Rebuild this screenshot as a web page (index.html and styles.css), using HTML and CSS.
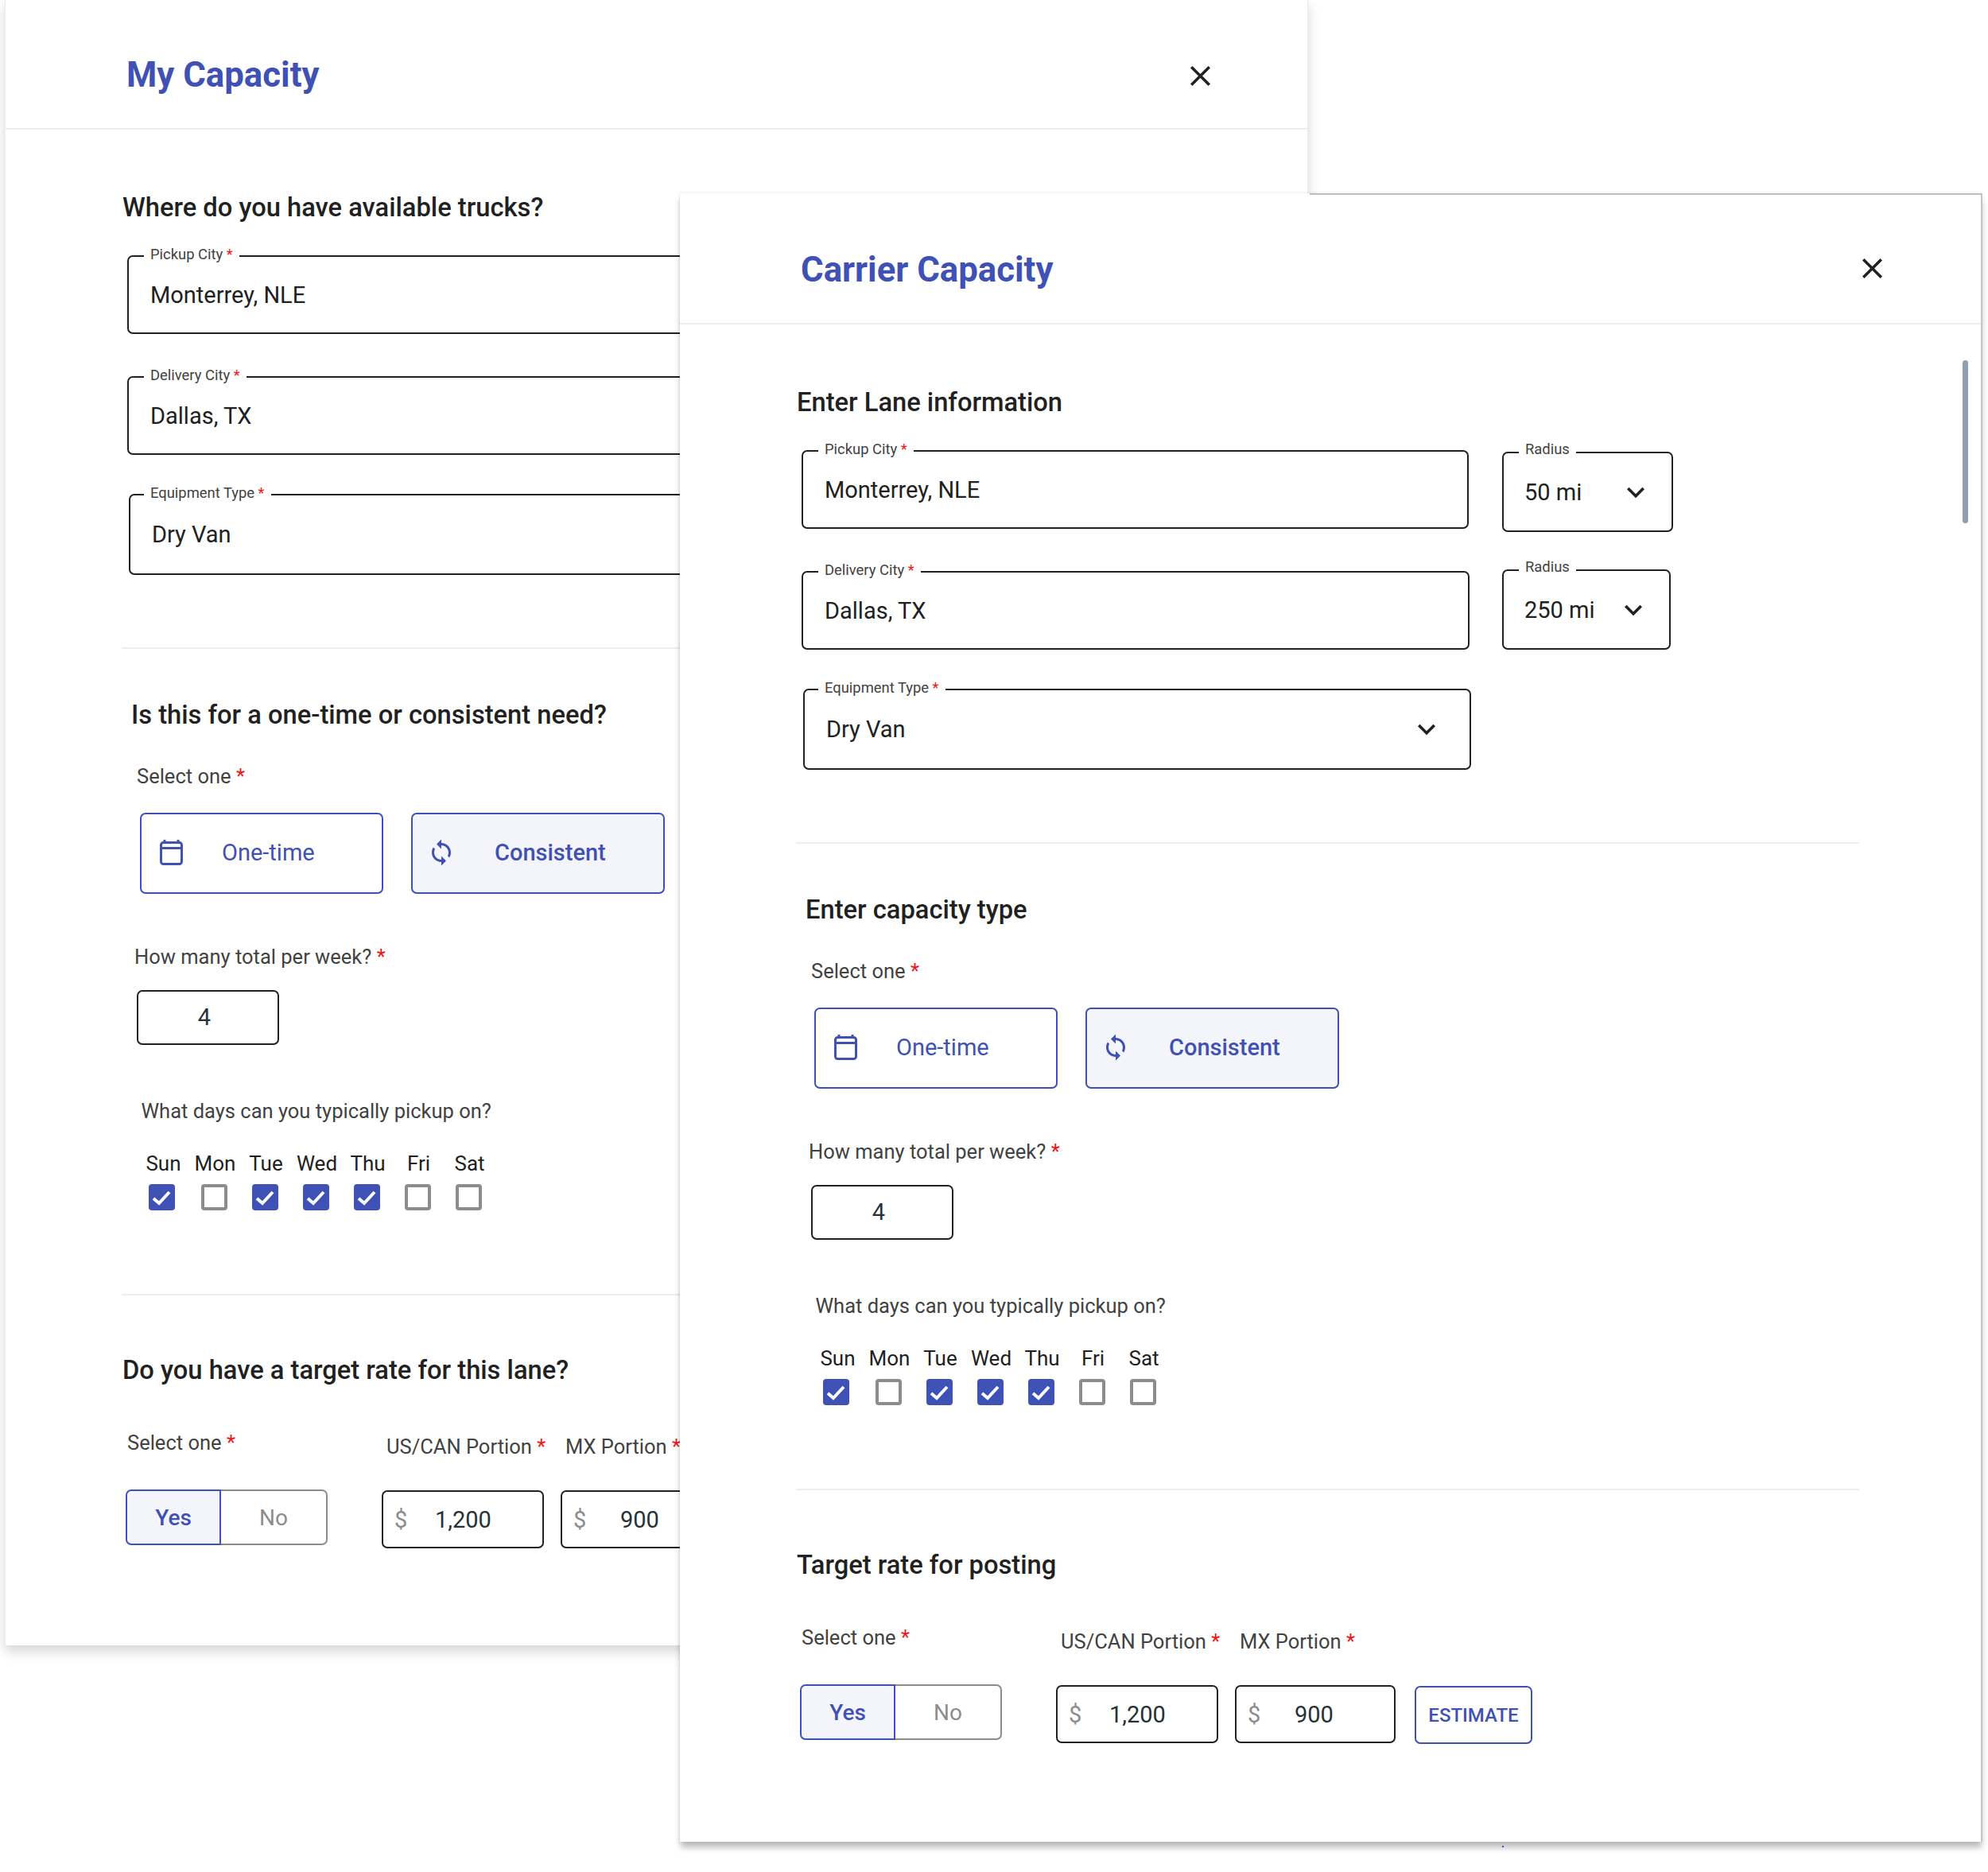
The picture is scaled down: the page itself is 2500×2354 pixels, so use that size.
FILE: index.html
```html
<!DOCTYPE html>
<html lang="en">
<head>
<meta charset="utf-8">
<title>Capacity</title>
<link rel="stylesheet" href="styles.css">
</head>
<body>
<main class="stage">

<article class="panel panel-back">
  <header class="panel-head">
    <h1 class="title">My Capacity</h1>
    <svg class="close" viewBox="0 0 24 24"><path d="M19 6.41 17.59 5 12 10.59 6.41 5 5 6.41 10.59 12 5 17.59 6.41 19 12 13.41 17.59 19 19 17.59 13.41 12z"/></svg>
  </header>
  <section class="sec-lane">
    <h2 class="heading">Where do you have available trucks?</h2>
    <div class="lane-row lane-row-1">
      <div class="field field-city"><span class="legend">Pickup City <em>*</em></span><span class="value">Monterrey, NLE</span></div>
    </div>
    <div class="lane-row lane-row-2">
      <div class="field field-city field-delivery"><span class="legend">Delivery City <em>*</em></span><span class="value">Dallas, TX</span></div>
    </div>
    <div class="lane-row lane-row-3">
      <div class="field field-equip"><span class="legend">Equipment Type <em>*</em></span><span class="value">Dry Van</span></div>
    </div>
  </section>
  <hr class="rule rule-1">
  <section class="sec-type">
    <h2 class="heading heading-type">Is this for a one-time or consistent need?</h2>
    <p class="text text-select">Select one <em>*</em></p>
    <div class="options">
      <div class="option option-one">
        <svg class="cal-icon" viewBox="0 0 29 32"><path d="M6 4V0M23 4V0M1.500 10.500H27.500"/><rect x="1.500" y="3.500" width="26" height="27" rx="3"/></svg>
        <span>One-time</span>
      </div>
      <div class="option option-two">
        <svg class="sync-icon" viewBox="0 0 24 24"><path d="M12 4V1L8 5l4 4V6c3.31 0 6 2.69 6 6 0 1.01-.25 1.97-.7 2.8l1.46 1.46C19.54 15.03 20 13.57 20 12c0-4.42-3.58-8-8-8zm0 14c-3.31 0-6-2.69-6-6 0-1.01.25-1.97.7-2.8L5.24 7.74C4.46 8.97 4 10.43 4 12c0 4.42 3.58 8 8 8v3l4-4-4-4v3z"/></svg>
        <span>Consistent</span>
      </div>
    </div>
    <p class="text text-many">How many total per week? <em>*</em></p>
    <div class="count">4</div>
    <p class="text text-days">What days can you typically pickup on?</p>
    <div class="days">
      <div class="day day-sun">Sun<span class="check on"><svg viewBox="0 0 33 33"><path d="M6 18l7 6 13-14"/></svg></span></div>
      <div class="day">Mon<span class="check"></span></div>
      <div class="day">Tue<span class="check on"><svg viewBox="0 0 33 33"><path d="M6 18l7 6 13-14"/></svg></span></div>
      <div class="day">Wed<span class="check on"><svg viewBox="0 0 33 33"><path d="M6 18l7 6 13-14"/></svg></span></div>
      <div class="day">Thu<span class="check on"><svg viewBox="0 0 33 33"><path d="M6 18l7 6 13-14"/></svg></span></div>
      <div class="day">Fri<span class="check"></span></div>
      <div class="day">Sat<span class="check"></span></div>
    </div>
  </section>
  <hr class="rule rule-2">
  <section class="sec-rate">
    <h2 class="heading heading-rate">Do you have a target rate for this lane?</h2>
    <div class="rates">
      <div class="col-choice">
        <p class="text text-choice">Select one <em>*</em></p>
        <div class="toggle"><span class="yes">Yes</span><span class="no">No</span></div>
      </div>
      <div class="col-us">
        <p class="text text-portion">US/CAN Portion <em>*</em></p>
        <div class="money"><span class="dollar">$</span><span class="amount">1,200</span></div>
      </div>
      <div class="col-mx">
        <p class="text text-portion">MX Portion <em>*</em></p>
        <div class="money money-mx"><span class="dollar">$</span><span class="amount">900</span></div>
      </div>
    </div>
  </section>
</article>

<article class="panel panel-front">
  <header class="panel-head">
    <h1 class="title">Carrier Capacity</h1>
    <svg class="close" viewBox="0 0 24 24"><path d="M19 6.41 17.59 5 12 10.59 6.41 5 5 6.41 10.59 12 5 17.59 6.41 19 12 13.41 17.59 19 19 17.59 13.41 12z"/></svg>
  </header>
  <div class="scroll-thumb"></div>
  <section class="sec-lane">
    <h2 class="heading">Enter Lane information</h2>
    <div class="lane-row lane-row-1">
      <div class="field field-city"><span class="legend">Pickup City <em>*</em></span><span class="value">Monterrey, NLE</span></div>
      <div class="field field-radius field-radius-1"><span class="legend">Radius</span><span class="value">50 mi</span><svg class="chev" viewBox="0 0 24 24"><path d="M16.59 8.59 12 13.17 7.41 8.59 6 10l6 6 6-6z"/></svg></div>
    </div>
    <div class="lane-row lane-row-2">
      <div class="field field-city field-delivery"><span class="legend">Delivery City <em>*</em></span><span class="value">Dallas, TX</span></div>
      <div class="field field-radius field-radius-2"><span class="legend">Radius</span><span class="value">250 mi</span><svg class="chev" viewBox="0 0 24 24"><path d="M16.59 8.59 12 13.17 7.41 8.59 6 10l6 6 6-6z"/></svg></div>
    </div>
    <div class="lane-row lane-row-3">
      <div class="field field-equip"><span class="legend">Equipment Type <em>*</em></span><span class="value">Dry Van</span><svg class="chev" viewBox="0 0 24 24"><path d="M16.59 8.59 12 13.17 7.41 8.59 6 10l6 6 6-6z"/></svg></div>
    </div>
  </section>
  <hr class="rule rule-1">
  <section class="sec-type">
    <h2 class="heading heading-type">Enter capacity type</h2>
    <p class="text text-select">Select one <em>*</em></p>
    <div class="options">
      <div class="option option-one">
        <svg class="cal-icon" viewBox="0 0 29 32"><path d="M6 4V0M23 4V0M1.500 10.500H27.500"/><rect x="1.500" y="3.500" width="26" height="27" rx="3"/></svg>
        <span>One-time</span>
      </div>
      <div class="option option-two">
        <svg class="sync-icon" viewBox="0 0 24 24"><path d="M12 4V1L8 5l4 4V6c3.31 0 6 2.69 6 6 0 1.01-.25 1.97-.7 2.8l1.46 1.46C19.54 15.03 20 13.57 20 12c0-4.42-3.58-8-8-8zm0 14c-3.31 0-6-2.69-6-6 0-1.01.25-1.97.7-2.8L5.24 7.74C4.46 8.97 4 10.43 4 12c0 4.42 3.58 8 8 8v3l4-4-4-4v3z"/></svg>
        <span>Consistent</span>
      </div>
    </div>
    <p class="text text-many">How many total per week? <em>*</em></p>
    <div class="count">4</div>
    <p class="text text-days">What days can you typically pickup on?</p>
    <div class="days">
      <div class="day day-sun">Sun<span class="check on"><svg viewBox="0 0 33 33"><path d="M6 18l7 6 13-14"/></svg></span></div>
      <div class="day">Mon<span class="check"></span></div>
      <div class="day">Tue<span class="check on"><svg viewBox="0 0 33 33"><path d="M6 18l7 6 13-14"/></svg></span></div>
      <div class="day">Wed<span class="check on"><svg viewBox="0 0 33 33"><path d="M6 18l7 6 13-14"/></svg></span></div>
      <div class="day">Thu<span class="check on"><svg viewBox="0 0 33 33"><path d="M6 18l7 6 13-14"/></svg></span></div>
      <div class="day">Fri<span class="check"></span></div>
      <div class="day">Sat<span class="check"></span></div>
    </div>
  </section>
  <hr class="rule rule-2">
  <section class="sec-rate">
    <h2 class="heading heading-rate">Target rate for posting</h2>
    <div class="rates">
      <div class="col-choice">
        <p class="text text-choice">Select one <em>*</em></p>
        <div class="toggle"><span class="yes">Yes</span><span class="no">No</span></div>
      </div>
      <div class="col-us">
        <p class="text text-portion">US/CAN Portion <em>*</em></p>
        <div class="money"><span class="dollar">$</span><span class="amount">1,200</span></div>
      </div>
      <div class="col-mx">
        <p class="text text-portion">MX Portion <em>*</em></p>
        <div class="money money-mx"><span class="dollar">$</span><span class="amount">900</span></div>
      </div>
      <div class="estimate">ESTIMATE</div>
    </div>
  </section>
</article>

<span class="stray-dot"></span>
</main>
</body>
</html>
```

FILE: styles.css
```css
* { box-sizing: border-box; }
html, body { margin: 0; padding: 0; background: #fff; }
body { font-family: Roboto, "Liberation Sans", sans-serif; color: #212121; }
.stage { position: relative; width: 2500px; height: 2354px; overflow: hidden; }

/* Two overlapping windows on a free canvas */
.panel { position: absolute; background: #fff; overflow: hidden; }
.panel-back { left: 6px; top: -2px; width: 1639px; height: 2071px; border-left: 1px solid #ececec; border-right: 1px solid #ececec; box-shadow: 0 8px 14px rgba(0,0,0,.16); }
.panel-front { left: 855px; top: 243px; width: 1638px; height: 2073px; border-right: 2px solid #c4c4c4; box-shadow: 0 8px 8px -1px rgba(0,0,0,.28), -1px 0 2px rgba(0,0,0,.06), 0 -2px 2px rgba(0,0,0,.03); }
.panel-front::before { content: ""; position: absolute; top: 0; left: 792px; right: 0; height: 2px; background: #bdbdbd; }

.panel-head { display: flex; align-items: flex-start; height: 165px; padding: 71px 115px 0 152px; border-bottom: 2px solid #eeeeee; }
.panel-back .panel-head { padding-right: 113px; }
.title { margin: 0; font-size: 43.75px; line-height: 50px; font-weight: 700; color: #3f51b5; }
.close { width: 43px; height: 43px; margin: 1.5px 0 0 auto; fill: #212121; }
.panel-back .close { margin-top: 5px; }

.scroll-thumb { position: absolute; right: 16px; top: 210px; width: 7px; height: 205px; border-radius: 4px; background: #8f9fae; }
.stray-dot { position: absolute; left: 1889px; top: 2321px; width: 2px; height: 2px; background: #3f51b5; }

.heading { margin: 78px 0 0 147px; font-size: 32.7px; line-height: 40px; font-weight: 500; color: #212121; }
em { font-style: normal; color: #f01414; }

.lane-row { display: flex; align-items: flex-start; margin-left: 153px; }
.lane-row-1 { margin-top: 40px; min-height: 103px; }
.lane-row-2 { margin-top: 47px; min-height: 101px; }
.lane-row-3 { margin-top: 49px; margin-left: 155px; }

.field { position: relative; flex: none; display: flex; align-items: center; justify-content: space-between; border: 2px solid #212121; border-radius: 7px; padding: 0 27px; }
.field-city { width: 839px; height: 99px; }
.field-delivery { margin-top: 2px; width: 840px; }
.field-equip { width: 840px; height: 102px; }
.field-radius { padding: 0 26px 0 26px; }
.field-radius-1 { width: 215px; height: 101px; margin: 2px 0 0 42px; }
.field-radius-2 { width: 212px; height: 101px; margin-left: 41px; }
.legend { position: absolute; top: -15px; left: 19px; padding: 0 8px; background: #fff; font-size: 18.4px; line-height: 24px; color: #424242; white-space: nowrap; }
.field-radius .legend { top: -17px; }
.field-equip .legend { left: 17px; }
.value { font-size: 29px; line-height: 40px; color: #212121; }
.chev { flex: none; width: 44px; height: 44px; margin-right: -3px; fill: #212121; }
.field-equip .chev { margin-right: 5px; }

.rule { height: 2px; margin: 0 0 0 146px; width: 1337px; border: 0; background: #eeeeee; }
.rule-1 { margin-top: 91px; }
.rule-2 { margin-top: 105px; }

.heading-type { margin: 63px 0 0 158px; }
.heading-rate { margin-top: 74px; }
.text { margin: 0; font-size: 25.5px; line-height: 32px; color: #424242; }
.text-select { margin: 41px 0 0 165px; }
.options { display: flex; gap: 35px; margin: 30px 0 0 169px; }
.option { display: flex; align-items: center; height: 102px; padding-bottom: 2px; border: 2px solid #3f51b5; border-radius: 7px; color: #3f51b5; font-size: 29px; }
.option-one { width: 306px; }
.option-two { width: 319px; background: #f4f5fb; font-weight: 500; }
.cal-icon { flex: none; width: 29px; height: 32px; margin: 0 49px 0 23px; fill: none; stroke: #3f51b5; stroke-width: 3; }
.sync-icon { flex: none; width: 36px; height: 36px; margin: 0 49px 0 18px; fill: #3f51b5; }
.text-many { margin: 63px 0 0 162px; }
.count { width: 179px; height: 69px; margin: 26px 0 0 165px; padding: 0 9px 2px 0; border: 2px solid #212121; border-radius: 7px; display: flex; align-items: center; justify-content: center; font-size: 29px; color: #263238; }
.text-days { margin: 67px 0 0 170.5px; }
.days { display: flex; margin: 34px 0 0 167.5px; }
.day { width: 64px; font-size: 26px; line-height: 32px; text-align: center; color: #212121; }
.day-sun { margin-right: 2px; width: 62px; }
.check { display: block; width: 33px; height: 33px; margin: 10px 0 0 14.500px; border: 4px solid #8c8c8c; border-radius: 4px; background: #fff; }
.day-sun .check { margin-left: 12.500px; }
.check.on { border: 0; background: #3f51b5; }
.check svg { display: block; width: 33px; height: 33px; fill: none; stroke: #fff; stroke-width: 4; }

.rates { display: flex; align-items: flex-start; margin: 55px 0 0 151px; }
.col-choice { width: 322px; }
.text-choice { margin-left: 2px; }
.toggle { display: flex; height: 70px; width: 254px; margin-top: 43px; font-size: 28px; }
.toggle span { display: flex; align-items: center; justify-content: center; }
.yes { width: 120px; border: 2px solid #3f51b5; border-radius: 7px 0 0 7px; background: #f4f5fb; color: #3f51b5; font-weight: 500; }
.no { width: 134px; border: 2px solid #8c8c8c; border-left: 0; border-radius: 0 7px 7px 0; color: #8c8c8c; }
.col-us { width: 204px; margin-right: 21px; }
.col-mx { width: 202px; margin-right: 24px; }
.text-portion { margin: 5px 0 0 6px; white-space: nowrap; }
.money { display: flex; align-items: center; height: 73px; margin-top: 39px; padding-left: 14px; border: 2px solid #212121; border-radius: 7px; font-size: 29px; }
.dollar { width: 51px; color: #8c8c8c; }
.money-mx .dollar { width: 59px; }
.amount { color: #263238; }
.estimate { width: 148px; height: 73px; margin-top: 77px; display: flex; align-items: center; justify-content: center; border: 2px solid #3f51b5; border-radius: 7px; color: #3f51b5; font-size: 24px; font-weight: 500; }
```
